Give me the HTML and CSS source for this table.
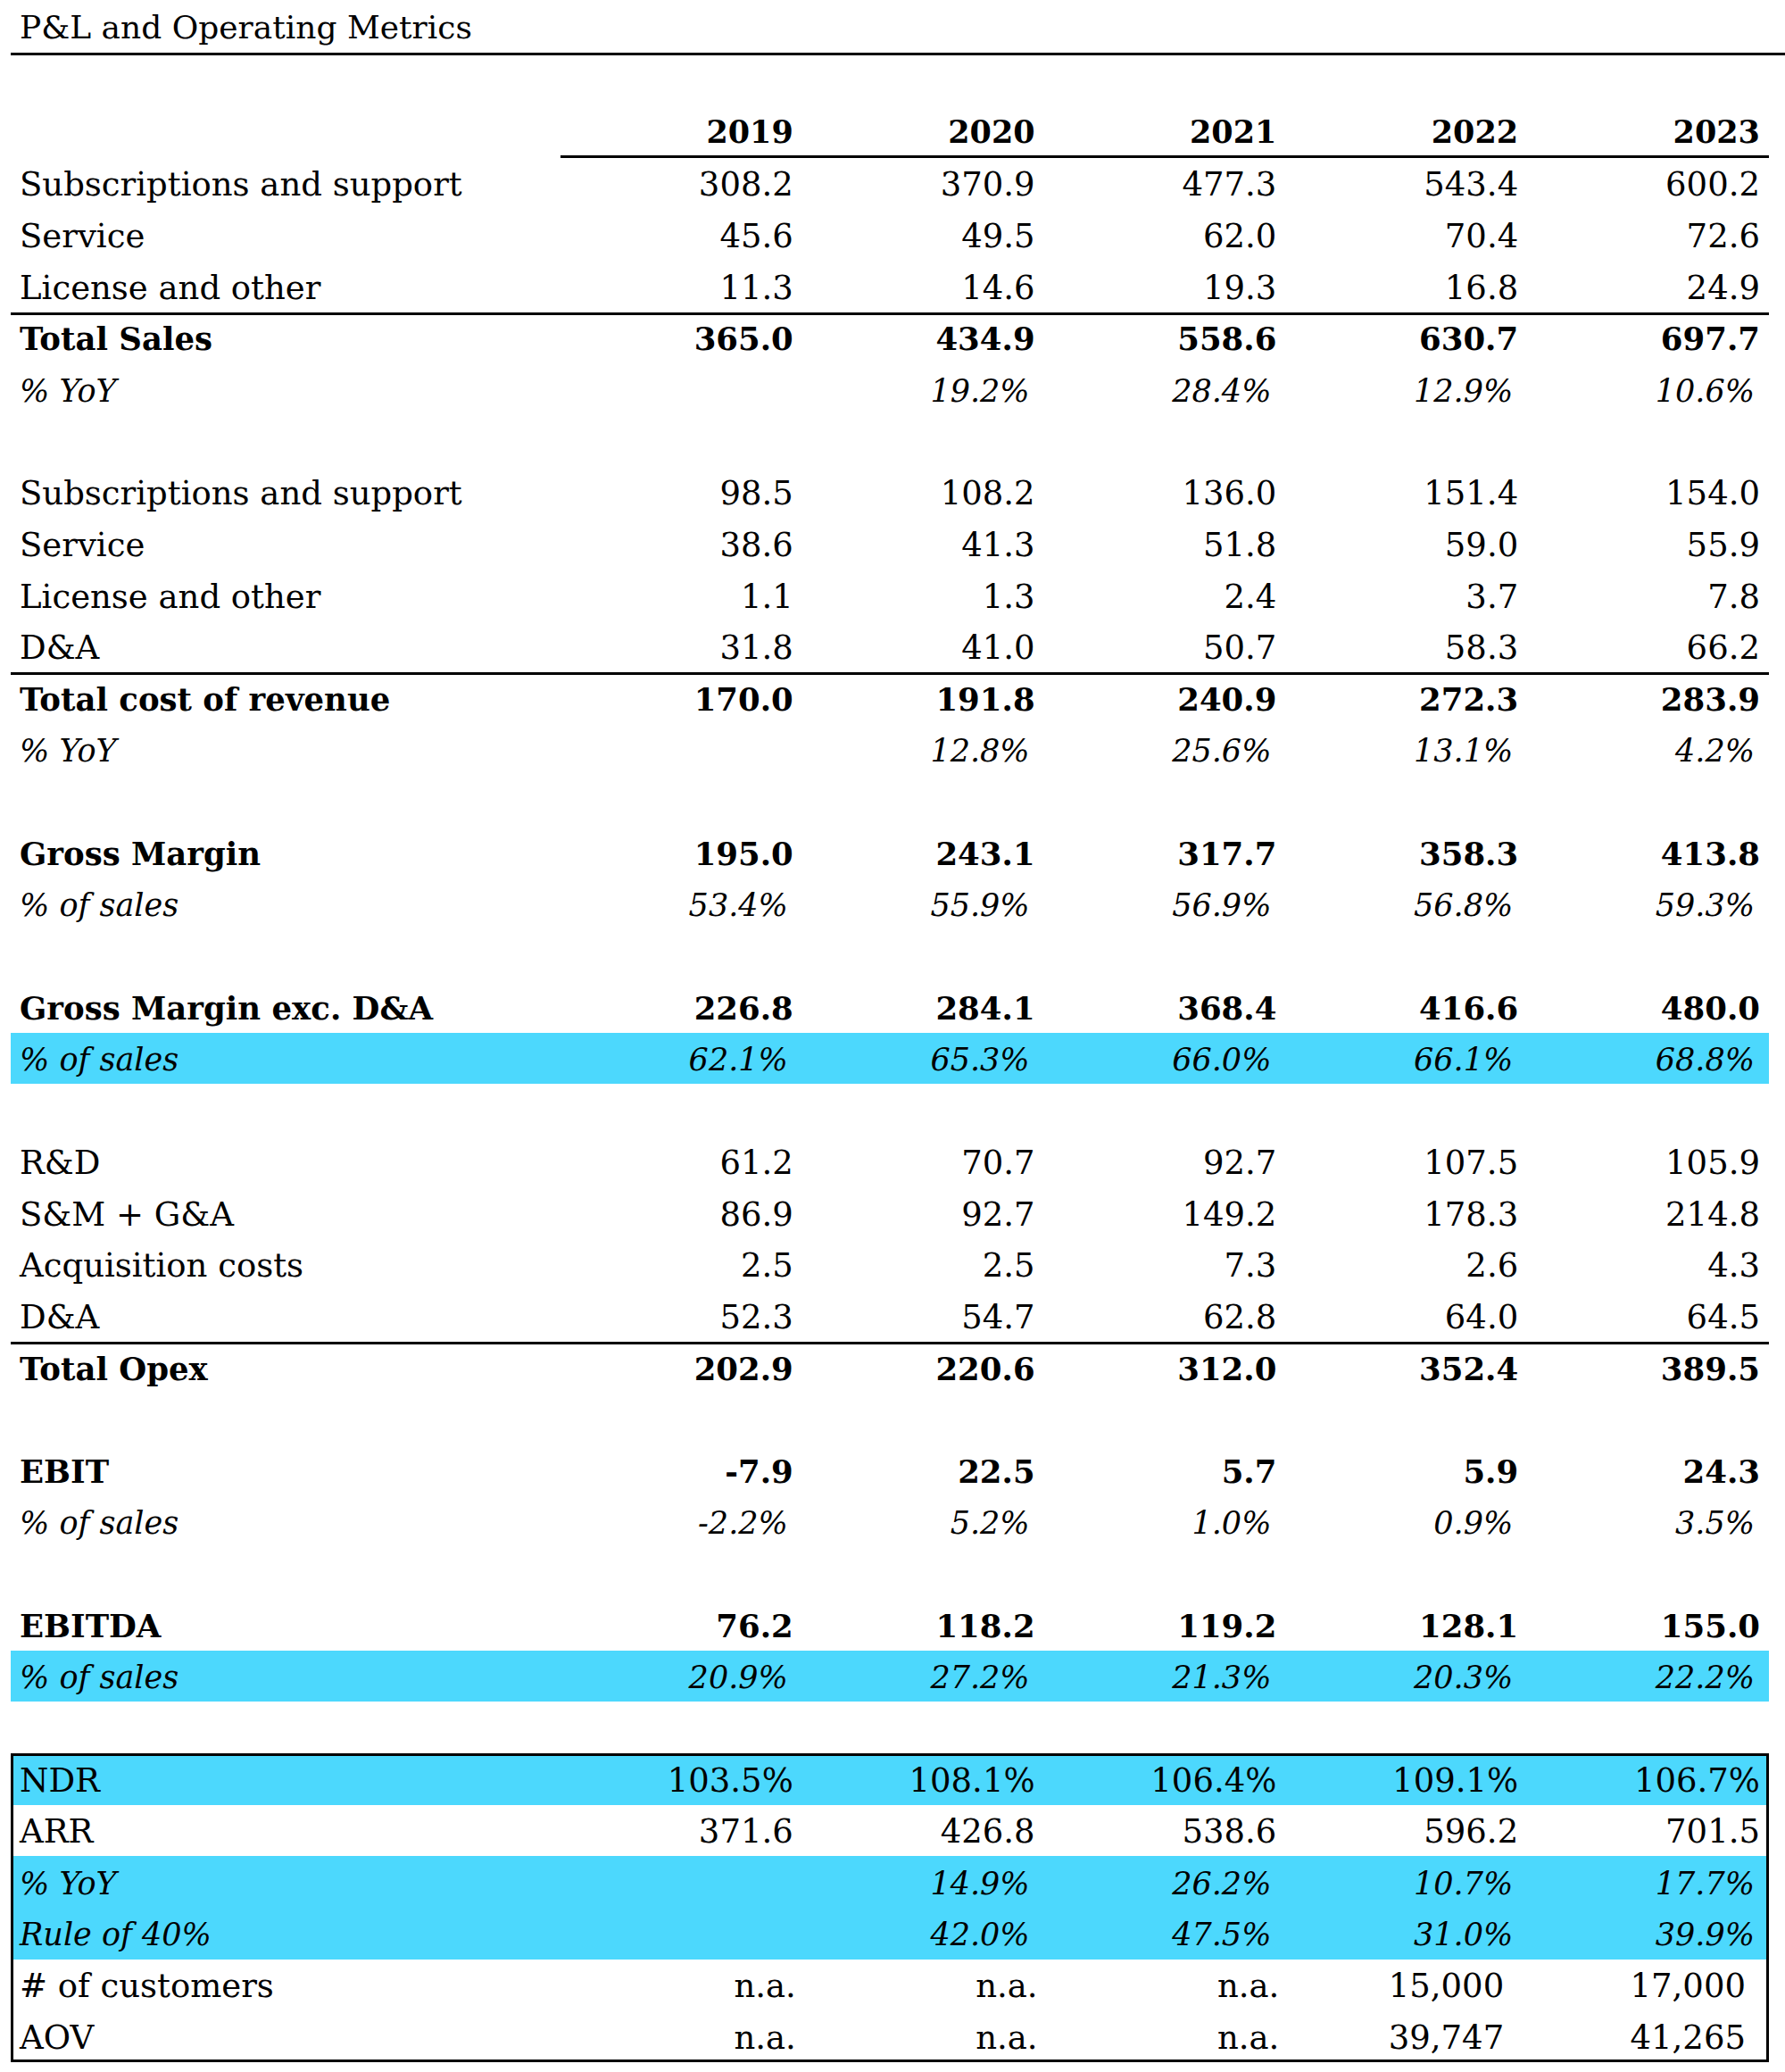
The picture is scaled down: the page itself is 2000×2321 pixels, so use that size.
FILE: index.html
```html
<!DOCTYPE html>
<html>
<head>
<meta charset="utf-8">
<title>P&amp;L and Operating Metrics</title>
<link rel="stylesheet" href="styles.css">
</head>
<body>
<div class="sheet">
  <div class="title">P&amp;L and Operating Metrics</div>
  <div class="table">
    <div class="row head"><div class="lbl"></div><div class="v yr">2019</div><div class="v yr">2020</div><div class="v yr">2021</div><div class="v yr">2022</div><div class="v yr">2023</div></div>

    <div class="row"><div class="lbl">Subscriptions and support</div><div class="v">308.2</div><div class="v">370.9</div><div class="v">477.3</div><div class="v">543.4</div><div class="v">600.2</div></div>
    <div class="row"><div class="lbl">Service</div><div class="v">45.6</div><div class="v">49.5</div><div class="v">62.0</div><div class="v">70.4</div><div class="v">72.6</div></div>
    <div class="row"><div class="lbl">License and other</div><div class="v">11.3</div><div class="v">14.6</div><div class="v">19.3</div><div class="v">16.8</div><div class="v">24.9</div></div>
    <div class="row bold total"><div class="lbl">Total Sales</div><div class="v">365.0</div><div class="v">434.9</div><div class="v">558.6</div><div class="v">630.7</div><div class="v">697.7</div></div>
    <div class="row ital"><div class="lbl">% YoY</div><div class="v"></div><div class="v">19.2%</div><div class="v">28.4%</div><div class="v">12.9%</div><div class="v">10.6%</div></div>
    <div class="row blank"></div>

    <div class="row"><div class="lbl">Subscriptions and support</div><div class="v">98.5</div><div class="v">108.2</div><div class="v">136.0</div><div class="v">151.4</div><div class="v">154.0</div></div>
    <div class="row"><div class="lbl">Service</div><div class="v">38.6</div><div class="v">41.3</div><div class="v">51.8</div><div class="v">59.0</div><div class="v">55.9</div></div>
    <div class="row"><div class="lbl">License and other</div><div class="v">1.1</div><div class="v">1.3</div><div class="v">2.4</div><div class="v">3.7</div><div class="v">7.8</div></div>
    <div class="row"><div class="lbl">D&amp;A</div><div class="v">31.8</div><div class="v">41.0</div><div class="v">50.7</div><div class="v">58.3</div><div class="v">66.2</div></div>
    <div class="row bold total"><div class="lbl">Total cost of revenue</div><div class="v">170.0</div><div class="v">191.8</div><div class="v">240.9</div><div class="v">272.3</div><div class="v">283.9</div></div>
    <div class="row ital"><div class="lbl">% YoY</div><div class="v"></div><div class="v">12.8%</div><div class="v">25.6%</div><div class="v">13.1%</div><div class="v">4.2%</div></div>
    <div class="row blank"></div>

    <div class="row bold"><div class="lbl">Gross Margin</div><div class="v">195.0</div><div class="v">243.1</div><div class="v">317.7</div><div class="v">358.3</div><div class="v">413.8</div></div>
    <div class="row ital"><div class="lbl">% of sales</div><div class="v">53.4%</div><div class="v">55.9%</div><div class="v">56.9%</div><div class="v">56.8%</div><div class="v">59.3%</div></div>
    <div class="row blank"></div>

    <div class="row bold"><div class="lbl">Gross Margin exc. D&amp;A</div><div class="v">226.8</div><div class="v">284.1</div><div class="v">368.4</div><div class="v">416.6</div><div class="v">480.0</div></div>
    <div class="row ital band"><div class="lbl">% of sales</div><div class="v">62.1%</div><div class="v">65.3%</div><div class="v">66.0%</div><div class="v">66.1%</div><div class="v">68.8%</div></div>
    <div class="row blank"></div>

    <div class="row"><div class="lbl">R&amp;D</div><div class="v">61.2</div><div class="v">70.7</div><div class="v">92.7</div><div class="v">107.5</div><div class="v">105.9</div></div>
    <div class="row"><div class="lbl">S&amp;M + G&amp;A</div><div class="v">86.9</div><div class="v">92.7</div><div class="v">149.2</div><div class="v">178.3</div><div class="v">214.8</div></div>
    <div class="row"><div class="lbl">Acquisition costs</div><div class="v">2.5</div><div class="v">2.5</div><div class="v">7.3</div><div class="v">2.6</div><div class="v">4.3</div></div>
    <div class="row"><div class="lbl">D&amp;A</div><div class="v">52.3</div><div class="v">54.7</div><div class="v">62.8</div><div class="v">64.0</div><div class="v">64.5</div></div>
    <div class="row bold total"><div class="lbl">Total Opex</div><div class="v">202.9</div><div class="v">220.6</div><div class="v">312.0</div><div class="v">352.4</div><div class="v">389.5</div></div>
    <div class="row blank"></div>

    <div class="row bold"><div class="lbl">EBIT</div><div class="v">-7.9</div><div class="v">22.5</div><div class="v">5.7</div><div class="v">5.9</div><div class="v">24.3</div></div>
    <div class="row ital"><div class="lbl">% of sales</div><div class="v">-2.2%</div><div class="v">5.2%</div><div class="v">1.0%</div><div class="v">0.9%</div><div class="v">3.5%</div></div>
    <div class="row blank"></div>

    <div class="row bold"><div class="lbl">EBITDA</div><div class="v">76.2</div><div class="v">118.2</div><div class="v">119.2</div><div class="v">128.1</div><div class="v">155.0</div></div>
    <div class="row ital band"><div class="lbl">% of sales</div><div class="v">20.9%</div><div class="v">27.2%</div><div class="v">21.3%</div><div class="v">20.3%</div><div class="v">22.2%</div></div>
    <div class="row blank"></div>

    <div class="box">
      <div class="row band"><div class="lbl">NDR</div><div class="v">103.5%</div><div class="v">108.1%</div><div class="v">106.4%</div><div class="v">109.1%</div><div class="v">106.7%</div></div>
      <div class="row"><div class="lbl">ARR</div><div class="v">371.6</div><div class="v">426.8</div><div class="v">538.6</div><div class="v">596.2</div><div class="v">701.5</div></div>
      <div class="row ital band"><div class="lbl">% YoY</div><div class="v"></div><div class="v">14.9%</div><div class="v">26.2%</div><div class="v">10.7%</div><div class="v">17.7%</div></div>
      <div class="row ital band"><div class="lbl">Rule of 40%</div><div class="v"></div><div class="v">42.0%</div><div class="v">47.5%</div><div class="v">31.0%</div><div class="v">39.9%</div></div>
      <div class="row"><div class="lbl"># of customers</div><div class="v na">n.a.</div><div class="v na">n.a.</div><div class="v na">n.a.</div><div class="v cnt">15,000</div><div class="v cnt">17,000</div></div>
      <div class="row"><div class="lbl">AOV</div><div class="v na">n.a.</div><div class="v na">n.a.</div><div class="v na">n.a.</div><div class="v cnt">39,747</div><div class="v cnt">41,265</div></div>
    </div>
  </div>
</div>
</body>
</html>
```

FILE: styles.css
```css
html, body {
  margin: 0;
  padding: 0;
  background: #ffffff;
}

body {
  font-family: "DejaVu Serif", "Liberation Serif", serif;
  font-size: 37px;
  color: #000000;
}

.sheet {
  padding-left: 12px;
}

.title {
  height: 62px;
  box-sizing: border-box;
  border-bottom: 3px solid #000;
  padding-left: 10px;
  padding-top: 3px;
  line-height: 56px;
  font-size: 36px;
  white-space: nowrap;
}

.table {
  width: 1970px;
  margin-top: 57px;
}

.row {
  display: grid;
  grid-template-columns: 616px repeat(5, 1fr);
  height: 57.66px;
  box-sizing: border-box;
  padding-top: 3px;
  align-items: center;
  white-space: nowrap;
}

.row.total {
  padding-top: 0;
}

.row.head {
  padding-top: 0;
}

.lbl {
  padding-left: 10px;
}

.v {
  text-align: right;
  padding-right: 10px;
}

.head .yr {
  font-weight: bold;
  font-size: 35px;
  align-self: stretch;
  display: flex;
  align-items: center;
  justify-content: flex-end;
  border-bottom: 3px solid #000;
  padding-top: 2px;
}

.bold {
  font-weight: bold;
  font-size: 35.5px;
}

.total {
  border-top: 3px solid #000;
}

.ital {
  font-style: italic;
  font-size: 35px;
}

.ital .v {
  padding-right: 16px;
}

.band {
  background: #4cd8fd;
}

.na {
  padding-right: 7px;
}

.cnt {
  padding-right: 26px;
}

.box {
  position: relative;
}

.box::after {
  content: "";
  position: absolute;
  left: 0;
  right: 0;
  top: 0;
  bottom: 0;
  border: 3px solid #000;
  pointer-events: none;
}
```
